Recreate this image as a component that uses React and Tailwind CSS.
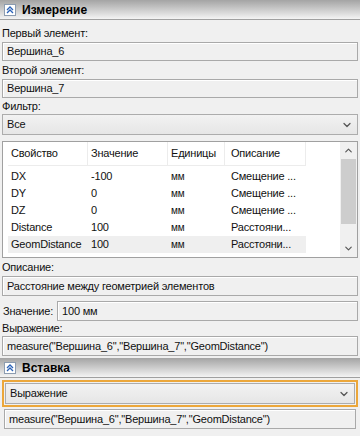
import { ChevronDown, ChevronUp } from "lucide-react";

function SectionHeader({ title }) {
  return (
    <div className="flex h-[20px] items-center gap-[6px] border-b border-[#a0a0a0] bg-gradient-to-b from-[#a4a4a4] to-[#f4f4f4] pl-[4px]">
      <div className="flex h-[12px] w-[12px] items-center justify-center border border-[#8c9cb0] bg-white">
        <svg width="8" height="8" viewBox="0 0 8 8" fill="none" stroke="#2a62b8" strokeWidth="1.3">
          <path d="M1 4 L4 1 L7 4" />
          <path d="M1 7 L4 4 L7 7" />
        </svg>
      </div>
      <span className="text-[12px] font-bold tracking-normal text-black">{title}</span>
    </div>
  );
}

function Field({ children, className = "" }) {
  return (
    <div className={"flex h-[19px] items-center whitespace-nowrap border border-[#a9a9a9] bg-[#f0f0f0] px-[4px] shadow-[inset_1px_1px_0_#fff] " + className}>
      {children}
    </div>
  );
}

function Label({ children, h = "h-[18px]" }) {
  return <div className={h + " flex items-center"}>{children}</div>;
}

const rows = [
  ["DX", "-100", "мм", "Смещение ..."],
  ["DY", "0", "мм", "Смещение ..."],
  ["DZ", "0", "мм", "Смещение ..."],
  ["Distance", "100", "мм", "Расстояни..."],
  ["GeomDistance", "100", "мм", "Расстояни..."],
];

export default function App() {
  return (
    <div
      className="h-[436px] w-[360px] overflow-hidden bg-[#f0f0f0] text-[11px] tracking-[-0.2px] text-[#111]"
      style={{ fontFamily: "'Liberation Sans', Arial, sans-serif" }}
    >
      <SectionHeader title="Измерение" />
      <div className="px-[2px] pt-[4px]">
        <Label>Первый элемент:</Label>
        <Field>Вершина_6</Field>
        <Label>Второй элемент:</Label>
        <Field>Вершина_7</Field>
        <Label h="h-[16px]">Фильтр:</Label>
        <div className="flex h-[21px] items-center justify-between border border-[#acacac] bg-gradient-to-b from-[#f2f2f2] to-[#e6e6e6] px-[4px]">
          <span>Все</span>
          <ChevronDown size={12} strokeWidth={2.5} className="text-[#555]" />
        </div>

        <div className="mt-[6px] flex h-[117px] border border-[#a0a0a0] bg-white">
          <div className="flex-1 pl-[5px]">
            <div className="flex h-[24px] w-[298px] items-center border-b border-[#ececec]">
              <div className="w-[80px] border-r border-[#ececec] pl-[3px] leading-[23px]">Свойство</div>
              <div className="w-[80px] border-r border-[#ececec] pl-[3px] leading-[23px]">Значение</div>
              <div className="w-[57px] border-r border-[#ececec] pl-[3px] leading-[23px]">Единицы</div>
              <div className="w-[81px] border-r border-[#ececec] pl-[6px] leading-[23px]">Описание</div>
            </div>
            <div className="pt-[2px]">
              {rows.map((r, i) => (
                <div
                  key={r[0]}
                  className={"flex h-[17px] w-[298px] items-center whitespace-nowrap " + (i === 4 ? "bg-[#efefef]" : "")}
                >
                  <div className="w-[80px] pl-[3px]">{r[0]}</div>
                  <div className="w-[80px] pl-[3px]">{r[1]}</div>
                  <div className="w-[57px] pl-[3px] text-[10px]">{r[2]}</div>
                  <div className="w-[81px] overflow-hidden pl-[6px]">{r[3]}</div>
                </div>
              ))}
            </div>
          </div>
          <div className="flex w-[17px] flex-col bg-[#f0f0f0]">
            <div className="flex h-[17px] items-center justify-center">
              <ChevronUp size={11} strokeWidth={2.5} className="text-[#555]" />
            </div>
            <div className="mx-[1px] h-[65px] bg-[#cdcdcd]" />
            <div className="flex-1" />
            <div className="flex h-[17px] items-center justify-center">
              <ChevronDown size={11} strokeWidth={2.5} className="text-[#555]" />
            </div>
          </div>
        </div>

        <Label>Описание:</Label>
        <Field className="h-[20px]">Расстояние между геометрией элементов</Field>
        <div className="mt-[5px] flex items-center gap-[4px]">
          <span className="pl-[1px]">Значение:</span>
          <Field className="flex-1 h-[20px]">100 мм</Field>
        </div>
        <Label h="h-[15px]">Выражение:</Label>
        <Field className="h-[20px]">measure("Вершина_6","Вершина_7","GeomDistance")</Field>
      </div>
      <div className="mt-[2px]">
        <SectionHeader title="Вставка" />
      </div>
      <div className="px-[2px] pt-[2px]">
        <div className="border-2 border-[#eca73a] p-[1px]">
          <div className="flex h-[21px] items-center justify-between border border-[#acacac] bg-gradient-to-b from-[#f2f2f2] to-[#e6e6e6] px-[4px]">
            <span>Выражение</span>
            <ChevronDown size={12} strokeWidth={2.5} className="text-[#555]" />
          </div>
        </div>
        <Field className="mx-[2px] mt-[2px] h-[20px]">measure("Вершина_6","Вершина_7","GeomDistance")</Field>
      </div>
    </div>
  );
}
